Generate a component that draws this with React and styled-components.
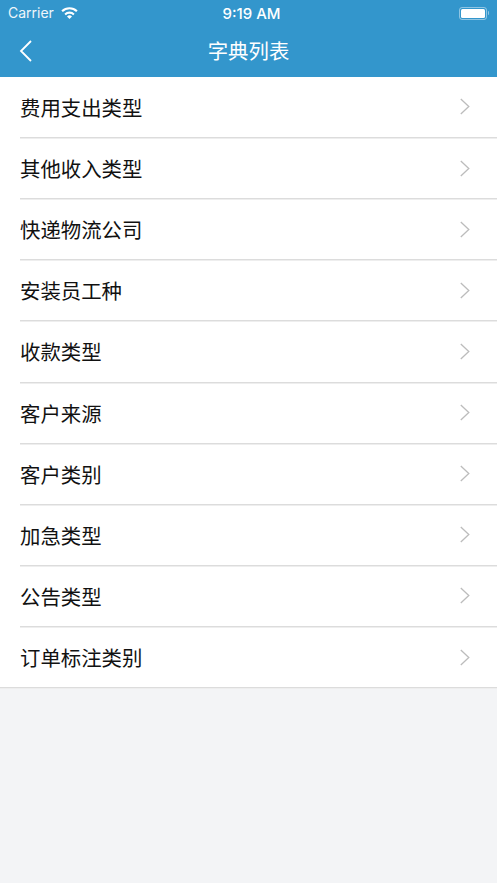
import React from "react";
import styled, { createGlobalStyle } from "styled-components";

const items = [
  "费用支出类型",
  "其他收入类型",
  "快递物流公司",
  "安装员工种",
  "收款类型",
  "客户来源",
  "客户类别",
  "加急类型",
  "公告类型",
  "订单标注类别",
];

const GlobalStyle = createGlobalStyle`
  html, body {
    margin: 0;
    padding: 0;
    background: #f3f4f6;
  }
  body {
    font-family: "Liberation Sans", "Noto Sans CJK SC", sans-serif;
  }
`;

const Page = styled.div`
  width: 497px;
  height: 883px;
  overflow: hidden;
  background: #f3f4f6;
`;

const Header = styled.header`
  height: 76.8px;
  background: #3396cc;
  color: #fff;
`;

const StatusBar = styled.div`
  height: 26px;
  display: grid;
  grid-template-columns: 1fr auto 1fr;
  align-items: center;
  padding: 0 8px;
  font-size: 15px;
  font-family: "Inter", "Liberation Sans", sans-serif;
`;

const Carrier = styled.div`
  display: flex;
  align-items: center;
  gap: 7px;
  font-size: 14px;
  font-weight: 400;
`;

const CarrierName = styled.span`
  padding-bottom: 2px;
  opacity: 0.92;
`;

const Clock = styled.div`
  padding-left: 6px;
  font-weight: 500;
`;

const Battery = styled.div`
  justify-self: end;
  display: flex;
  align-items: center;
`;

const BatteryBody = styled.div`
  width: 24px;
  height: 9px;
  padding: 1px;
  border: 1px solid rgba(255, 255, 255, 0.45);
  border-radius: 3px;
  display: flex;
  &::before {
    content: "";
    flex: 1;
    background: #fff;
    border-radius: 1.5px;
  }
`;

const BatteryTip = styled.div`
  width: 1.5px;
  height: 4px;
  margin-left: 1px;
  background: rgba(255, 255, 255, 0.45);
  border-radius: 0 1px 1px 0;
`;

const NavBar = styled.div`
  height: 50.8px;
  display: grid;
  grid-template-columns: 1fr auto 1fr;
  align-items: center;
  padding: 0 19px;
`;

const Title = styled.h1`
  margin: 0 0 2px;
  font-size: 20.4px;
  line-height: 48px;
  font-weight: 400;
  font-family: "Noto Sans CJK SC", sans-serif;
`;

const List = styled.ul`
  margin: 0;
  padding: 0;
  list-style: none;
  background: #fff;
`;

const Item = styled.li`
  height: 61.15px;
  box-sizing: border-box;
  padding-left: ${(p) => (p.$last ? 20 : 0)}px;
  margin-left: ${(p) => (p.$last ? 0 : 20)}px;
  padding-right: 27px;
  display: flex;
  align-items: center;
  justify-content: space-between;
  border-bottom: 1px solid #dcdcdc;
  box-shadow: 0 1px 0 #eeeeee;
`;

const Label = styled.span`
  font-size: 20.4px;
  color: #111;
  font-family: "Noto Sans CJK SC", sans-serif;
`;

const Chevron = () => (
  <svg width="10" height="17" viewBox="0 0 10 17" fill="none">
    <path d="M0.8 1 L8.8 8.5 L0.8 16" stroke="#bcbcbc" strokeWidth="1.3" />
  </svg>
);

const Wifi = () => (
  <svg width="17" height="12" viewBox="0 0 17 12" fill="none">
    <path d="M1.1 4.3 A 10.6 10.6 0 0 1 15.900 4.300" stroke="#fff" strokeWidth="2.1" />
    <path d="M4.100 7.400 A 6.300 6.300 0 0 1 12.900 7.400" stroke="#fff" strokeWidth="2.1" />
    <path d="M6 9.400 A 3.600 3.600 0 0 1 11 9.400 L8.500 12 Z" fill="#fff" />
  </svg>
);

const Back = () => (
  <svg width="14" height="22" viewBox="0 0 14 22" fill="none">
    <path d="M12 1 L2 11 L12 21" stroke="#fff" strokeWidth="1.8" />
  </svg>
);

export default function App() {
  return (
    <Page>
      <GlobalStyle />
      <Header>
        <StatusBar>
          <Carrier>
            <CarrierName>Carrier</CarrierName>
            <Wifi />
          </Carrier>
          <Clock>9:19 AM</Clock>
          <Battery>
            <BatteryBody />
            <BatteryTip />
          </Battery>
        </StatusBar>
        <NavBar>
          <Back />
          <Title>字典列表</Title>
        </NavBar>
      </Header>
      <List>
        {items.map((item, i) => (
          <Item key={item} $last={i === items.length - 1}>
            <Label>{item}</Label>
            <Chevron />
          </Item>
        ))}
      </List>
    </Page>
  );
}
